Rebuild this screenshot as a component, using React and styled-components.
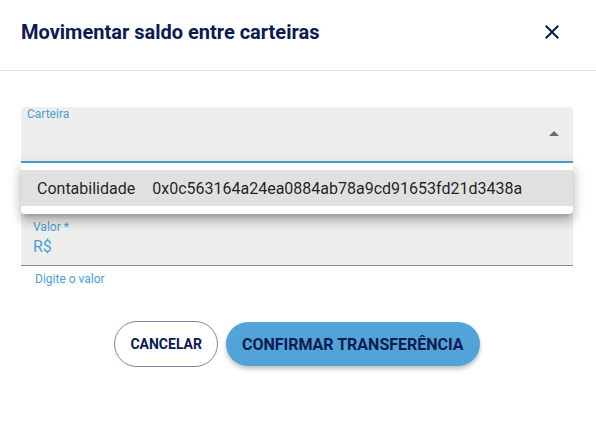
import React from 'react'
import styled, {createGlobalStyle} from 'styled-components'

const navy = '#0c1a52'
const blue = '#4b9fd8'

function App() {
    return (
        <>
            <GlobalStyle />
            <Dialog>
                <Header>
                    <Title>Movimentar saldo entre carteiras</Title>
                    <CloseButton aria-label="fechar">
                        <svg width="24" height="24" viewBox="0 0 24 24">
                            <path fill={navy} d="M19 6.41 17.59 5 12 10.59 6.41 5 5 6.41 10.59 12 5 17.59 6.41 19 12 13.41 17.59 19 19 17.59 13.41 12z" />
                        </svg>
                    </CloseButton>
                </Header>

                <Body>
                    <SelectField>
                        <SelectLabel>Carteira</SelectLabel>
                        <Arrow width="24" height="24" viewBox="0 0 24 24">
                            <path fill="#6b6b6b" d="M7 14l5-5 5 5z" />
                        </Arrow>
                        {/* Open menu */}
                        <Menu>
                            <MenuItem $active>
                                <WalletName>Contabilidade</WalletName>
                                0x0c563164a24ea0884ab78a9cd91653fd21d3438a
                            </MenuItem>
                        </Menu>
                    </SelectField>

                    <InputField>
                        <InputLabel>Valor *</InputLabel>
                        <InputValue>R$</InputValue>
                    </InputField>
                    <Helper>Digite o valor</Helper>

                    <Actions>
                        <OutlineButton>Cancelar</OutlineButton>
                        <PrimaryButton>Confirmar transferência</PrimaryButton>
                    </Actions>
                </Body>
            </Dialog>
        </>
    )
}

const GlobalStyle = createGlobalStyle`
    body {
        margin: 0;
        background: #ffffff;
        font-family: Roboto, "Liberation Sans", sans-serif;
    }
`

const Dialog = styled.div`
    width: 596px;
    height: 424px;
    background: #ffffff;
`

const Header = styled.div`
    height: 71px;
    display: flex;
    align-items: center;
    justify-content: space-between;
    padding: 0 24px 6px 21px;
    box-sizing: border-box;
    border-bottom: 1px solid #e0e0e0;
`

const Title = styled.h2`
    margin: 0;
    font-size: 20px;
    font-weight: 700;
    color: ${navy};
`

const CloseButton = styled.button`
    width: 40px;
    height: 40px;
    display: flex;
    align-items: center;
    justify-content: center;
    padding: 0;
    border: none;
    background: none;
    cursor: pointer;
`

const Body = styled.div`
    padding: 36px 23px 0 21px;
`

const SelectField = styled.div`
    position: relative;
    height: 56px;
    box-sizing: border-box;
    background: #eeeeee;
    border-radius: 4px 4px 0 0;
    border-bottom: 2px solid ${blue};
`

const SelectLabel = styled.div`
    padding: 0 0 0 6px;
    font-size: 12px;
    line-height: 14px;
    color: ${blue};
`

const Arrow = styled.svg`
    position: absolute;
    right: 7px;
    top: 15px;
`

const Menu = styled.div`
    position: absolute;
    top: calc(100% + 2px);
    left: 0;
    right: 0;
    z-index: 10;
    padding: 7px 0 8px;
    background: #ffffff;
    border-radius: 4px;
    box-shadow: 0px 5px 5px -3px rgba(0, 0, 0, 0.2), 0px 8px 10px 1px rgba(0, 0, 0, 0.14), 0px 3px 14px 2px rgba(0, 0, 0, 0.12);
`

const MenuItem = styled.div`
    height: 36px;
    display: flex;
    align-items: center;
    padding: 0 16px;
    font-size: 16px;
    color: rgba(0, 0, 0, 0.87);
    background: ${p => (p.$active ? '#e0e0e0' : 'transparent')};
`

const WalletName = styled.span`
    margin-right: 17px;
`

const InputField = styled.div`
    margin-top: 47px;
    height: 56px;
    box-sizing: border-box;
    padding: 10px 12px 0;
    background: #eeeeee;
    border-radius: 4px 4px 0 0;
    border-bottom: 1px solid #8a8a8a;
`

const InputLabel = styled.div`
    font-size: 12px;
    line-height: 14px;
    color: ${blue};
`

const InputValue = styled.div`
    margin-top: 3px;
    font-size: 16px;
    line-height: 19px;
    color: ${blue};
`

const Helper = styled.div`
    margin: 6px 14px 0;
    font-size: 12px;
    line-height: 14px;
    color: ${blue};
`

const Actions = styled.div`
    margin-top: 35px;
    display: flex;
    align-items: center;
    justify-content: center;
    gap: 8px;
`

const OutlineButton = styled.button`
    height: 46px;
    padding: 0 15px;
    border: 1px solid #7d82a8;
    border-radius: 23px;
    background: #ffffff;
    font-family: Roboto, "Liberation Sans", sans-serif;
    font-size: 14px;
    font-weight: 700;
    text-transform: uppercase;
    color: ${navy};
    cursor: pointer;
`

const PrimaryButton = styled.button`
    height: 44px;
    padding: 0 16px;
    border: none;
    border-radius: 22px;
    background: #52a3d7;
    box-shadow: 0px 3px 4px rgba(0, 0, 0, 0.25);
    font-family: Roboto, "Liberation Sans", sans-serif;
    font-size: 16px;
    font-weight: 700;
    text-transform: uppercase;
    color: ${navy};
    cursor: pointer;
`

export default App
